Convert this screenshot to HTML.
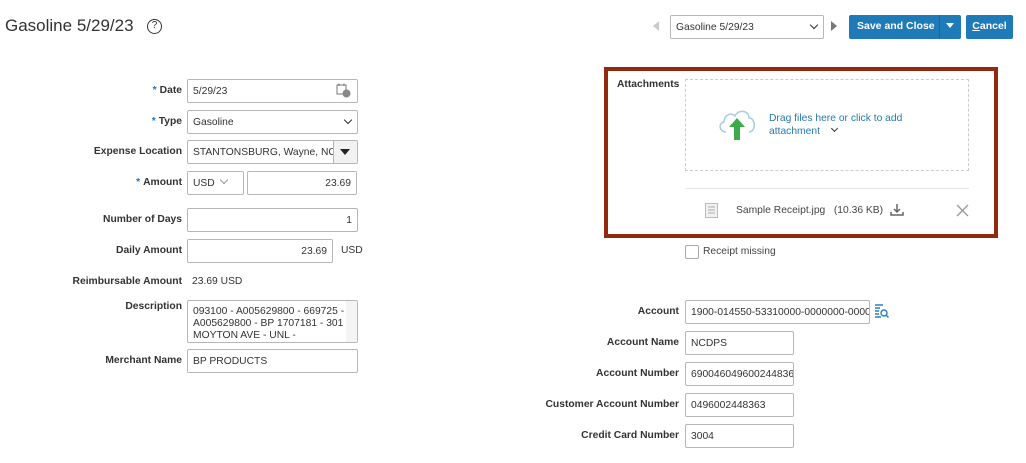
<!DOCTYPE html>
<html><head><meta charset="utf-8"><style>
*{box-sizing:border-box;margin:0;padding:0}
body{width:1026px;height:463px;background:#fff;font-family:"Liberation Sans",Arial,sans-serif;color:#333;position:relative;overflow:hidden;font-size:10.3px}
.a{position:absolute}
.lbl{position:absolute;font-weight:bold;font-size:10.3px;color:#333;text-align:right;white-space:nowrap}
.lbl b{color:#1f73b7;font-weight:bold;margin-right:3px}
.in{position:absolute;border:1px solid #b7b7b7;border-radius:2px;background:#fff;font-size:10.3px;color:#333;padding:1px 5px 0;line-height:22px;white-space:nowrap;overflow:hidden}
.r{text-align:right}
.chev{position:absolute;width:6px;height:6px;border-right:1.5px solid #333;border-bottom:1.5px solid #333;transform:rotate(45deg)}
</style></head><body>
<div class="a" style="left:5px;top:16px;font-size:17px;color:#333">Gasoline 5/29/23</div>
<div class="a" style="left:147px;top:19px;width:15px;height:15px;border:1.3px solid #333;border-radius:50%;font-size:10px;text-align:center;line-height:12px">?</div>

<div class="lbl" style="right:844px;top:85px"><b>*</b>Date</div>
<div class="in" style="left:187px;top:79px;width:171px;height:24px">5/29/23</div>
<svg class="a" style="left:336px;top:83px" width="15" height="15" viewBox="0 0 15 15"><rect x="1" y="2" width="9" height="9" fill="none" stroke="#777"/><line x1="3" y1="0.5" x2="3" y2="3" stroke="#777"/><line x1="8" y1="0.5" x2="8" y2="3" stroke="#777"/><circle cx="10.5" cy="10.5" r="4" fill="#888"/></svg>

<div class="lbl" style="right:844px;top:116px"><b>*</b>Type</div>
<div class="in" style="left:187px;top:110px;width:171px;height:24px">Gasoline</div>
<div class="chev" style="left:345px;top:117px"></div>

<div class="lbl" style="right:844px;top:146px">Expense Location</div>
<div class="in" style="left:187px;top:140px;width:171px;height:24px">STANTONSBURG, Wayne, NC</div>
<div class="a" style="left:333px;top:141px;width:24px;height:22px;background:#f2f2f2;border-left:1px solid #b7b7b7"></div>
<div class="a" style="left:340px;top:149px;width:0;height:0;border-left:5px solid transparent;border-right:5px solid transparent;border-top:6px solid #222"></div>

<div class="lbl" style="right:844px;top:177px"><b>*</b>Amount</div>
<div class="in" style="left:187px;top:171px;width:57px;height:24px">USD</div>
<div class="a" style="left:221px;top:177px;width:6px;height:6px;border-right:1px solid #999;border-bottom:1px solid #999;transform:rotate(45deg)"></div>
<div class="in r" style="left:247px;top:171px;width:110px;height:24px">23.69</div>

<div class="lbl" style="right:844px;top:214px">Number of Days</div>
<div class="in r" style="left:187px;top:208px;width:171px;height:24px">1</div>
<div class="lbl" style="right:844px;top:245px">Daily Amount</div>
<div class="in r" style="left:187px;top:239px;width:146px;height:24px">23.69</div>
<div class="a" style="left:341px;top:245px">USD</div>
<div class="lbl" style="right:844px;top:276px">Reimbursable Amount</div>
<div class="a" style="left:192px;top:276px">23.69 USD</div>
<div class="lbl" style="right:844px;top:301px">Description</div>
<div class="in" style="left:187px;top:300px;width:171px;height:43px;line-height:12px;padding-top:5px">093100 - A005629800 - 669725 -<br>A005629800 - BP 1707181 - 301<br>MOYTON AVE - UNL -</div>
<div class="a" style="left:346px;top:301px;width:11px;height:41px;background:#f4f4f4"></div>
<div class="lbl" style="right:844px;top:355px">Merchant Name</div>
<div class="in" style="left:187px;top:349px;width:171px;height:24px">BP PRODUCTS</div>

<!-- top right -->
<div class="a" style="left:653px;top:21px;border-top:5px solid transparent;border-bottom:5px solid transparent;border-right:6px solid #ccc"></div>
<div class="in" style="left:670px;top:15px;width:154px;height:24px">Gasoline 5/29/23</div>
<div class="chev" style="left:811px;top:22px"></div>
<div class="a" style="left:831px;top:21px;border-top:5px solid transparent;border-bottom:5px solid transparent;border-left:6px solid #777"></div>
<div class="a" style="left:849px;top:15px;width:112px;height:24px;background:#1f7ab8;border-radius:2px;color:#fff;font-weight:bold;line-height:23px;padding-left:8px;font-size:10.5px">Save and Close</div>
<div class="a" style="left:939px;top:15px;width:1px;height:24px;background:#17669c"></div>
<div class="a" style="left:946px;top:23px;border-left:4px solid transparent;border-right:4px solid transparent;border-top:5px solid #fff"></div>
<div class="a" style="left:966px;top:15px;width:47px;height:24px;background:#1f7ab8;border-radius:2px;color:#fff;font-weight:bold;line-height:23px;text-align:center;font-size:10.5px"><u>C</u>ancel</div>

<!-- attachments -->
<div class="a" style="left:604px;top:67px;width:394px;height:171px;border:4px solid #922a10"></div>
<div class="lbl" style="left:617px;top:79px">Attachments</div>
<div class="a" style="left:685px;top:79px;width:284px;height:92px;border:1px dashed #ccc"></div>
<svg class="a" style="left:716px;top:106px" width="42" height="36" viewBox="0 0 42 36"><path d="M10 26 C3 26 2 17 8 16 C8 9 15 6 19 10 C22 3 33 4 33 12 C40 12 40 26 33 26" fill="none" stroke="#a8cce6" stroke-width="1.5"/><path d="M21 12 L13 21 H18 V34 H24 V21 H29 Z" fill="#3eab4a"/></svg>
<div class="a" style="left:769px;top:112px;color:#2779b0;line-height:13px">Drag files here or click to add<br>attachment</div>
<div class="chev" style="left:832px;top:126px;width:5px;height:5px"></div>
<div class="a" style="left:685px;top:188px;width:284px;height:1px;background:#e4e4e4"></div>
<svg class="a" style="left:705px;top:203px" width="13" height="15" viewBox="0 0 13 15"><rect x="0.5" y="0.5" width="12" height="14" fill="#f1f1f1" stroke="#bbb"/><path d="M3 4h7M3 7h7M3 10h7" stroke="#aaa"/></svg>
<div class="a" style="left:736px;top:205px;color:#444">Sample Receipt.jpg&nbsp;&nbsp;&nbsp;(10.36 KB)</div>
<svg class="a" style="left:890px;top:203px" width="14" height="14" viewBox="0 0 14 14"><path d="M7 1v8M4 6l3 3 3-3M1 9v3h12V9" fill="none" stroke="#666" stroke-width="1.5"/></svg>
<svg class="a" style="left:956px;top:204px" width="13" height="13" viewBox="0 0 13 13"><path d="M1 1L12 12M12 1L1 12" stroke="#999" stroke-width="1.3"/></svg>

<div class="a" style="left:685px;top:245px;width:14px;height:14px;border:1px solid #aaa;border-radius:2px"></div>
<div class="a" style="left:703px;top:246px;color:#444">Receipt missing</div>

<div class="lbl" style="right:347px;top:306px">Account</div>
<div class="in" style="left:685px;top:300px;width:185px;height:24px">1900-014550-53310000-0000000-0000</div>
<svg class="a" style="left:874px;top:304px" width="15" height="15" viewBox="0 0 15 15"><path d="M1 1h8M1 4h5M1 7h4M1 10h4M1 13h6" stroke="#2a7ec1" stroke-width="1.4"/><circle cx="10" cy="9" r="3" fill="none" stroke="#2a7ec1" stroke-width="1.4"/><path d="M12 11l2.5 2.5" stroke="#2a7ec1" stroke-width="1.4"/></svg>
<div class="lbl" style="right:347px;top:337px">Account Name</div>
<div class="in" style="left:685px;top:331px;width:109px;height:24px">NCDPS</div>
<div class="lbl" style="right:347px;top:368px">Account Number</div>
<div class="in" style="left:685px;top:362px;width:109px;height:24px">6900460496002448363</div>
<div class="lbl" style="right:347px;top:399px">Customer Account Number</div>
<div class="in" style="left:685px;top:393px;width:109px;height:24px">0496002448363</div>
<div class="lbl" style="right:347px;top:430px">Credit Card Number</div>
<div class="in" style="left:685px;top:424px;width:109px;height:24px">3004</div>
</body></html>
